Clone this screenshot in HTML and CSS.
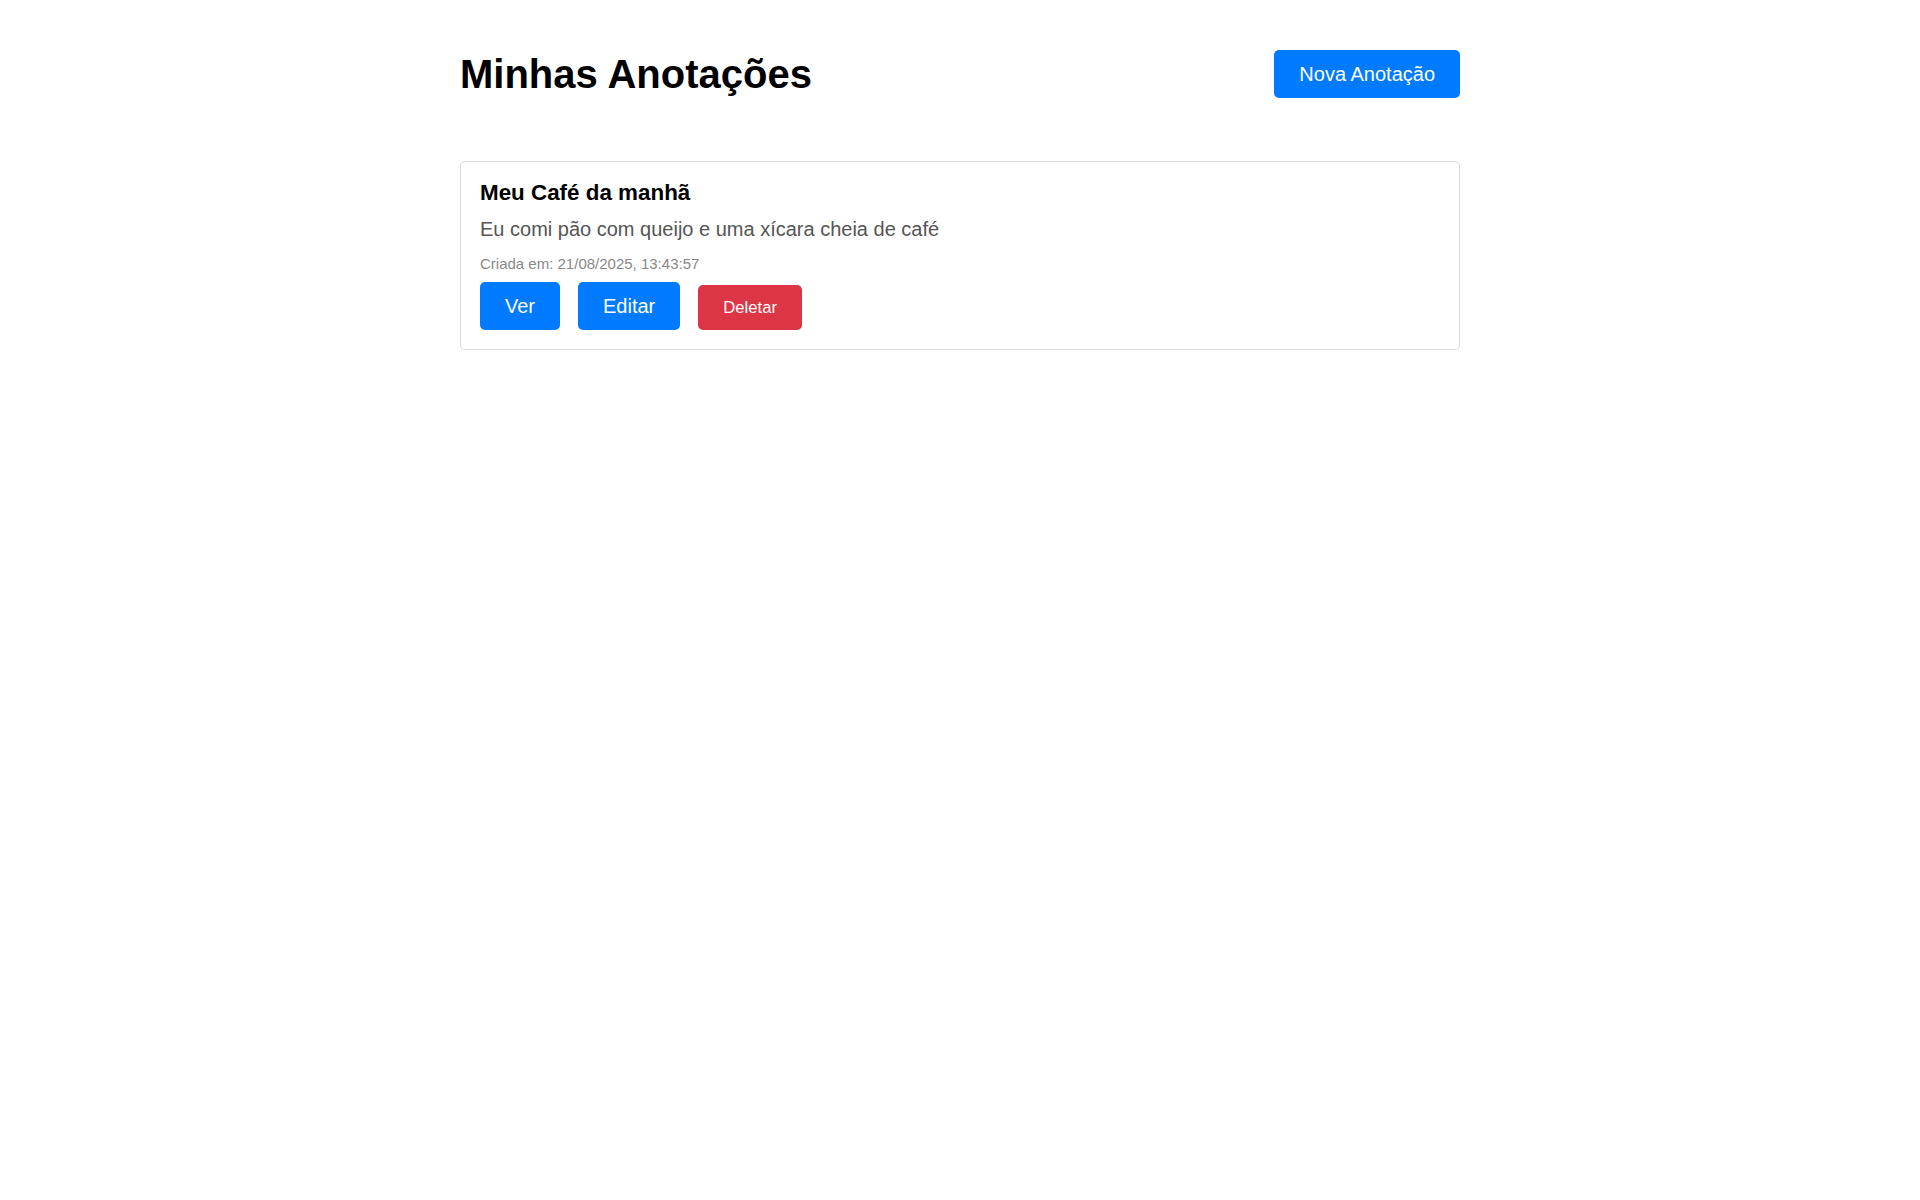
FILE: index.html
```html
<!DOCTYPE html>
<html lang="pt-BR">
<head>
<meta charset="utf-8">
<title>Minhas Anotações</title>
<link rel="stylesheet" href="styles.css">
</head>
<body>
<div class="container">
  <header class="header">
    <h1 class="page-title">Minhas Anotações</h1>
    <a class="btn btn-primary" href="#">Nova Anotação</a>
  </header>
  <div class="notes">
    <div class="note-card">
      <h3 class="note-title">Meu Café da manhã</h3>
      <p class="note-body">Eu comi pão com queijo e uma xícara cheia de café</p>
      <p class="note-meta">Criada em: 21/08/2025, 13:43:57</p>
      <div class="note-actions">
        <a class="btn btn-primary" href="#">Ver</a>
        <a class="btn btn-primary" href="#">Editar</a>
        <button class="btn btn-danger" type="button">Deletar</button>
      </div>
    </div>
  </div>
</div>
</body>
</html>
```

FILE: styles.css
```css
* { box-sizing: border-box; }

html, body {
  margin: 0;
  padding: 0;
  background: #ffffff;
}

body {
  font-family: "Liberation Sans", Arial, sans-serif;
  font-size: 20px;
  color: #000;
}

.container {
  width: 1000px;
  margin: 0 auto;
  padding-top: 50px;
}

.header {
  display: flex;
  justify-content: space-between;
  align-items: center;
  margin-bottom: 63px;
}

.page-title {
  margin: 0;
  font-size: 40px;
  font-weight: bold;
  line-height: normal;
  color: #000;
}

.btn {
  display: inline-block;
  padding: 12.5px 25px;
  border: none;
  border-radius: 5px;
  font-family: "Liberation Sans", Arial, sans-serif;
  font-size: 20px;
  line-height: normal;
  color: #fff;
  text-decoration: none;
  cursor: pointer;
}

.btn-primary {
  background: #007bff;
}

.btn-danger {
  background: #dc3545;
  font-size: 16.67px;
}

.note-card {
  border: 1px solid #dddddd;
  border-radius: 5px;
  padding: 19px;
}

.note-title {
  margin: 0 0 13px;
  font-size: 22.4px;
  font-weight: bold;
  line-height: 24px;
  color: #000;
}

.note-body {
  margin: 0 0 14px;
  font-size: 20px;
  line-height: normal;
  color: #555555;
}

.note-meta {
  margin: 0 0 10px;
  font-size: 15px;
  line-height: normal;
  color: #888888;
}

.note-actions {
  display: flex;
  align-items: baseline;
  gap: 18px;
}
```
